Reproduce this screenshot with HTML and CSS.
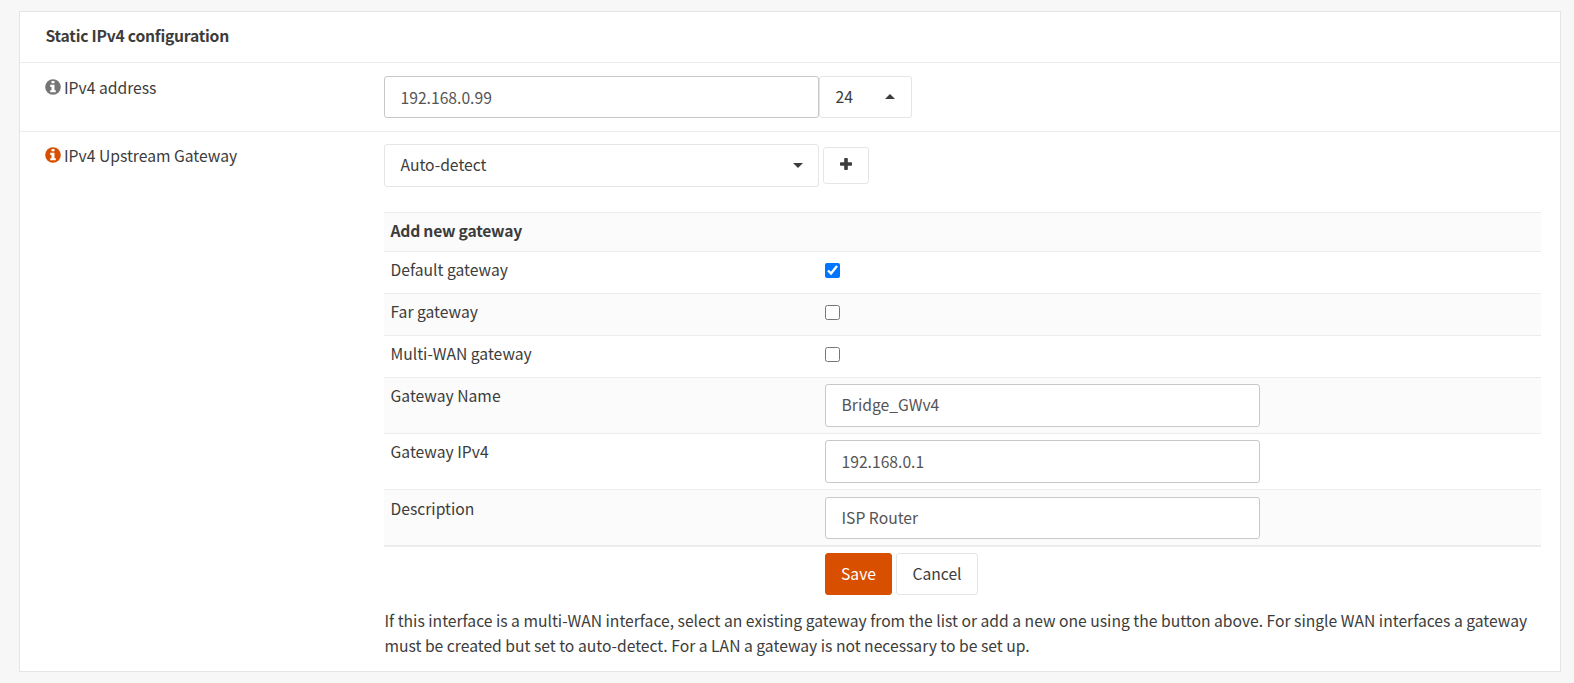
FILE: index.html
```html
<!DOCTYPE html>
<html lang="en">
  <head>
    <meta charset="UTF-8" />
    <meta name="viewport" content="width=device-width, initial-scale=1.0" />
    <title>Static IPv4 configuration</title>
    <link rel="stylesheet" href="styles.css">
  </head>
  <body>
    <section class="content-box">
      <div class="box-header"><strong>Static IPv4 configuration</strong></div>

      <div class="form-row row-address">
        <div class="row-label">
          <svg class="info-icon" viewBox="0 0 16 16">
            <circle cx="8" cy="8" r="7.8" />
            <path fill="#fff" d="M6.500 2h3v2.300h-3zM5.200 5.800h4.300v5.400h1.300v2.100H5.200v-2.100h1.300V7.900H5.200z" />
          </svg>
          <span>IPv4 address</span>
        </div>
        <div class="row-field">
          <div class="input-group">
            <input class="form-control" type="text" value="192.168.0.99" />
            <button class="btn select-btn subnet" type="button">
              <span>24</span>
              <span class="caret caret-up"></span>
            </button>
          </div>
        </div>
      </div>

      <div class="form-row row-gateway">
        <div class="row-label">
          <svg class="info-icon info-active" viewBox="0 0 16 16">
            <circle cx="8" cy="8" r="7.8" />
            <path fill="#fff" d="M6.500 2h3v2.300h-3zM5.200 5.800h4.300v5.400h1.300v2.100H5.200v-2.100h1.300V7.900H5.200z" />
          </svg>
          <span>IPv4 Upstream Gateway</span>
        </div>
        <div class="row-field">
          <div class="gateway-select">
            <button class="btn select-btn" type="button">
              <span>Auto-detect</span>
              <span class="caret"></span>
            </button>
            <button class="btn btn-add" type="button" title="Add">
              <svg class="plus-icon" viewBox="0 0 12 12">
                <path d="M5 0h2a.8.8 0 0 1 .8.8v3.4h3.4a.8.8 0 0 1 .8.8v2a.8.8 0 0 1-.8.8H7.800v3.400a.8.8 0 0 1-.8.8H5a.8.8 0 0 1-.8-.8V7.800H.8A.8.8 0 0 1 0 7V5a.8.8 0 0 1 .8-.8h3.400V.8A.8.8 0 0 1 5 0z" />
              </svg>
            </button>
          </div>

          <div class="gateway-table">
            <div class="gw-row gw-head"><strong>Add new gateway</strong></div>
            <div class="gw-row gw-check">
              <span>Default gateway</span>
              <input type="checkbox" checked />
            </div>
            <div class="gw-row gw-check">
              <span>Far gateway</span>
              <input type="checkbox" />
            </div>
            <div class="gw-row gw-check">
              <span>Multi-WAN gateway</span>
              <input type="checkbox" />
            </div>
            <div class="gw-row gw-name">
              <span>Gateway Name</span>
              <input class="form-control" type="text" value="Bridge_GWv4" />
            </div>
            <div class="gw-row gw-ip">
              <span>Gateway IPv4</span>
              <input class="form-control" type="text" value="192.168.0.1" />
            </div>
            <div class="gw-row gw-last">
              <span>Description</span>
              <input class="form-control" type="text" value="ISP Router" />
            </div>
            <div class="gw-actions">
              <button class="btn btn-primary" type="button">Save</button>
              <button class="btn btn-cancel" type="button">Cancel</button>
            </div>
          </div>

          <p class="help-text">
            If this interface is a multi-WAN interface, select an existing gateway from the list or add a new one using the button above. For single WAN interfaces a gateway<br>
            must be created but set to auto-detect. For a LAN a gateway is not necessary to be set up.
          </p>
        </div>
      </div>
    </section>
  </body>
</html>
```
FILE: styles.css
```css
* {
  box-sizing: border-box;
}
body {
  margin: 0;
  padding: 11px 13px 11px 19px;
  background: #f7f7f7;
  color: #3c3c3b;
  font-family: "Noto Sans CJK SC", "Open Sans", sans-serif;
  font-size: 15.68px;
  line-height: 25px;
}
button,
input {
  margin: 0;
  font: inherit;
  color: inherit;
}
strong {
  letter-spacing: -0.23px;
}
.content-box {
  height: 661px;
  background: #fff;
  border: 1px solid #e5e5e5;
}
.box-header {
  height: 50px;
  padding: 11px 25.5px;
}
.form-row {
  display: grid;
  grid-template-columns: 339px 1157px;
  padding-left: 25px;
  border-top: 1px solid #ececec;
}
.row-address {
  height: 69px;
  padding-top: 12px;
}
.row-gateway {
  padding-top: 12px;
}
.row-gateway .row-label {
  margin-top: -1px;
}
.row-label {
  display: flex;
  align-items: flex-start;
  gap: 3px;
}
.info-icon {
  width: 16px;
  height: 16px;
  margin-top: 4px;
  fill: #757575;
}
.info-active {
  fill: #d94f00;
}
.input-group {
  display: flex;
  margin-top: 1px;
}
.form-control {
  display: block;
  width: 435px;
  height: 42px;
  padding: 0 15.5px;
  color: #555;
  background: #fff;
  border: 1px solid #c8c8c8;
  border-radius: 3px;
}
.btn {
  display: flex;
  align-items: center;
  justify-content: center;
  height: 42px;
  padding: 0 0 2px;
  background: #fff;
  border: 1px solid #e5e5e5;
  border-radius: 3px;
}
.select-btn {
  justify-content: space-between;
  width: 435px;
  padding: 0 15px 2px 15.5px;
}
.subnet {
  width: 93px;
  padding-right: 16px;
}
.caret {
  margin-top: 2px;
  border-top: 5px solid #3c3c3b;
  border-left: 5px solid transparent;
  border-right: 5px solid transparent;
}
.caret-up {
  margin-top: 0;
  border-top: 0;
  border-bottom: 5px solid #3c3c3b;
}
.gateway-select {
  display: flex;
  align-items: center;
  gap: 4px;
  height: 43px;
}
.gateway-select .select-btn {
  height: 43px;
}
.btn-add {
  width: 46px;
  height: 37px;
}
.plus-icon {
  width: 12px;
  height: 12px;
  margin-bottom: 1px;
  fill: #3c3c3b;
}
.gateway-table {
  margin-top: 25px;
}
.gw-row {
  display: grid;
  grid-template-columns: 434.5px 1fr;
  align-items: start;
  height: 56px;
  padding: 6px 6.5px;
  border-top: 1px solid #ececec;
}
.gw-row:nth-child(odd) {
  background: #fbfbfb;
}
.gw-row span,
.gw-row strong {
  margin-top: -1px;
}
.gw-head {
  height: 39px;
}
.gw-check {
  height: 42px;
}
.gw-check input {
  width: 15px;
  height: 15px;
  margin-top: 5px;
}
.gw-name .form-control,
.gw-ip .form-control {
  height: 43px;
}
.gw-name .form-control {
  padding-bottom: 2px;
}
.gw-last {
  height: 58px;
  padding-top: 7px;
  border-bottom: 2px solid #ececec;
}
.gw-last .form-control {
  padding-bottom: 2px;
}
.gw-actions {
  display: flex;
  gap: 4px;
  padding: 6px 0 0 441px;
}
.btn-primary {
  width: 67px;
  color: #fff;
  background: #d94f00;
  border-color: #d94f00;
}
.btn-cancel {
  width: 82px;
}
.help-text {
  margin: 13px 0 0 0.5px;
  white-space: nowrap;
}
```
